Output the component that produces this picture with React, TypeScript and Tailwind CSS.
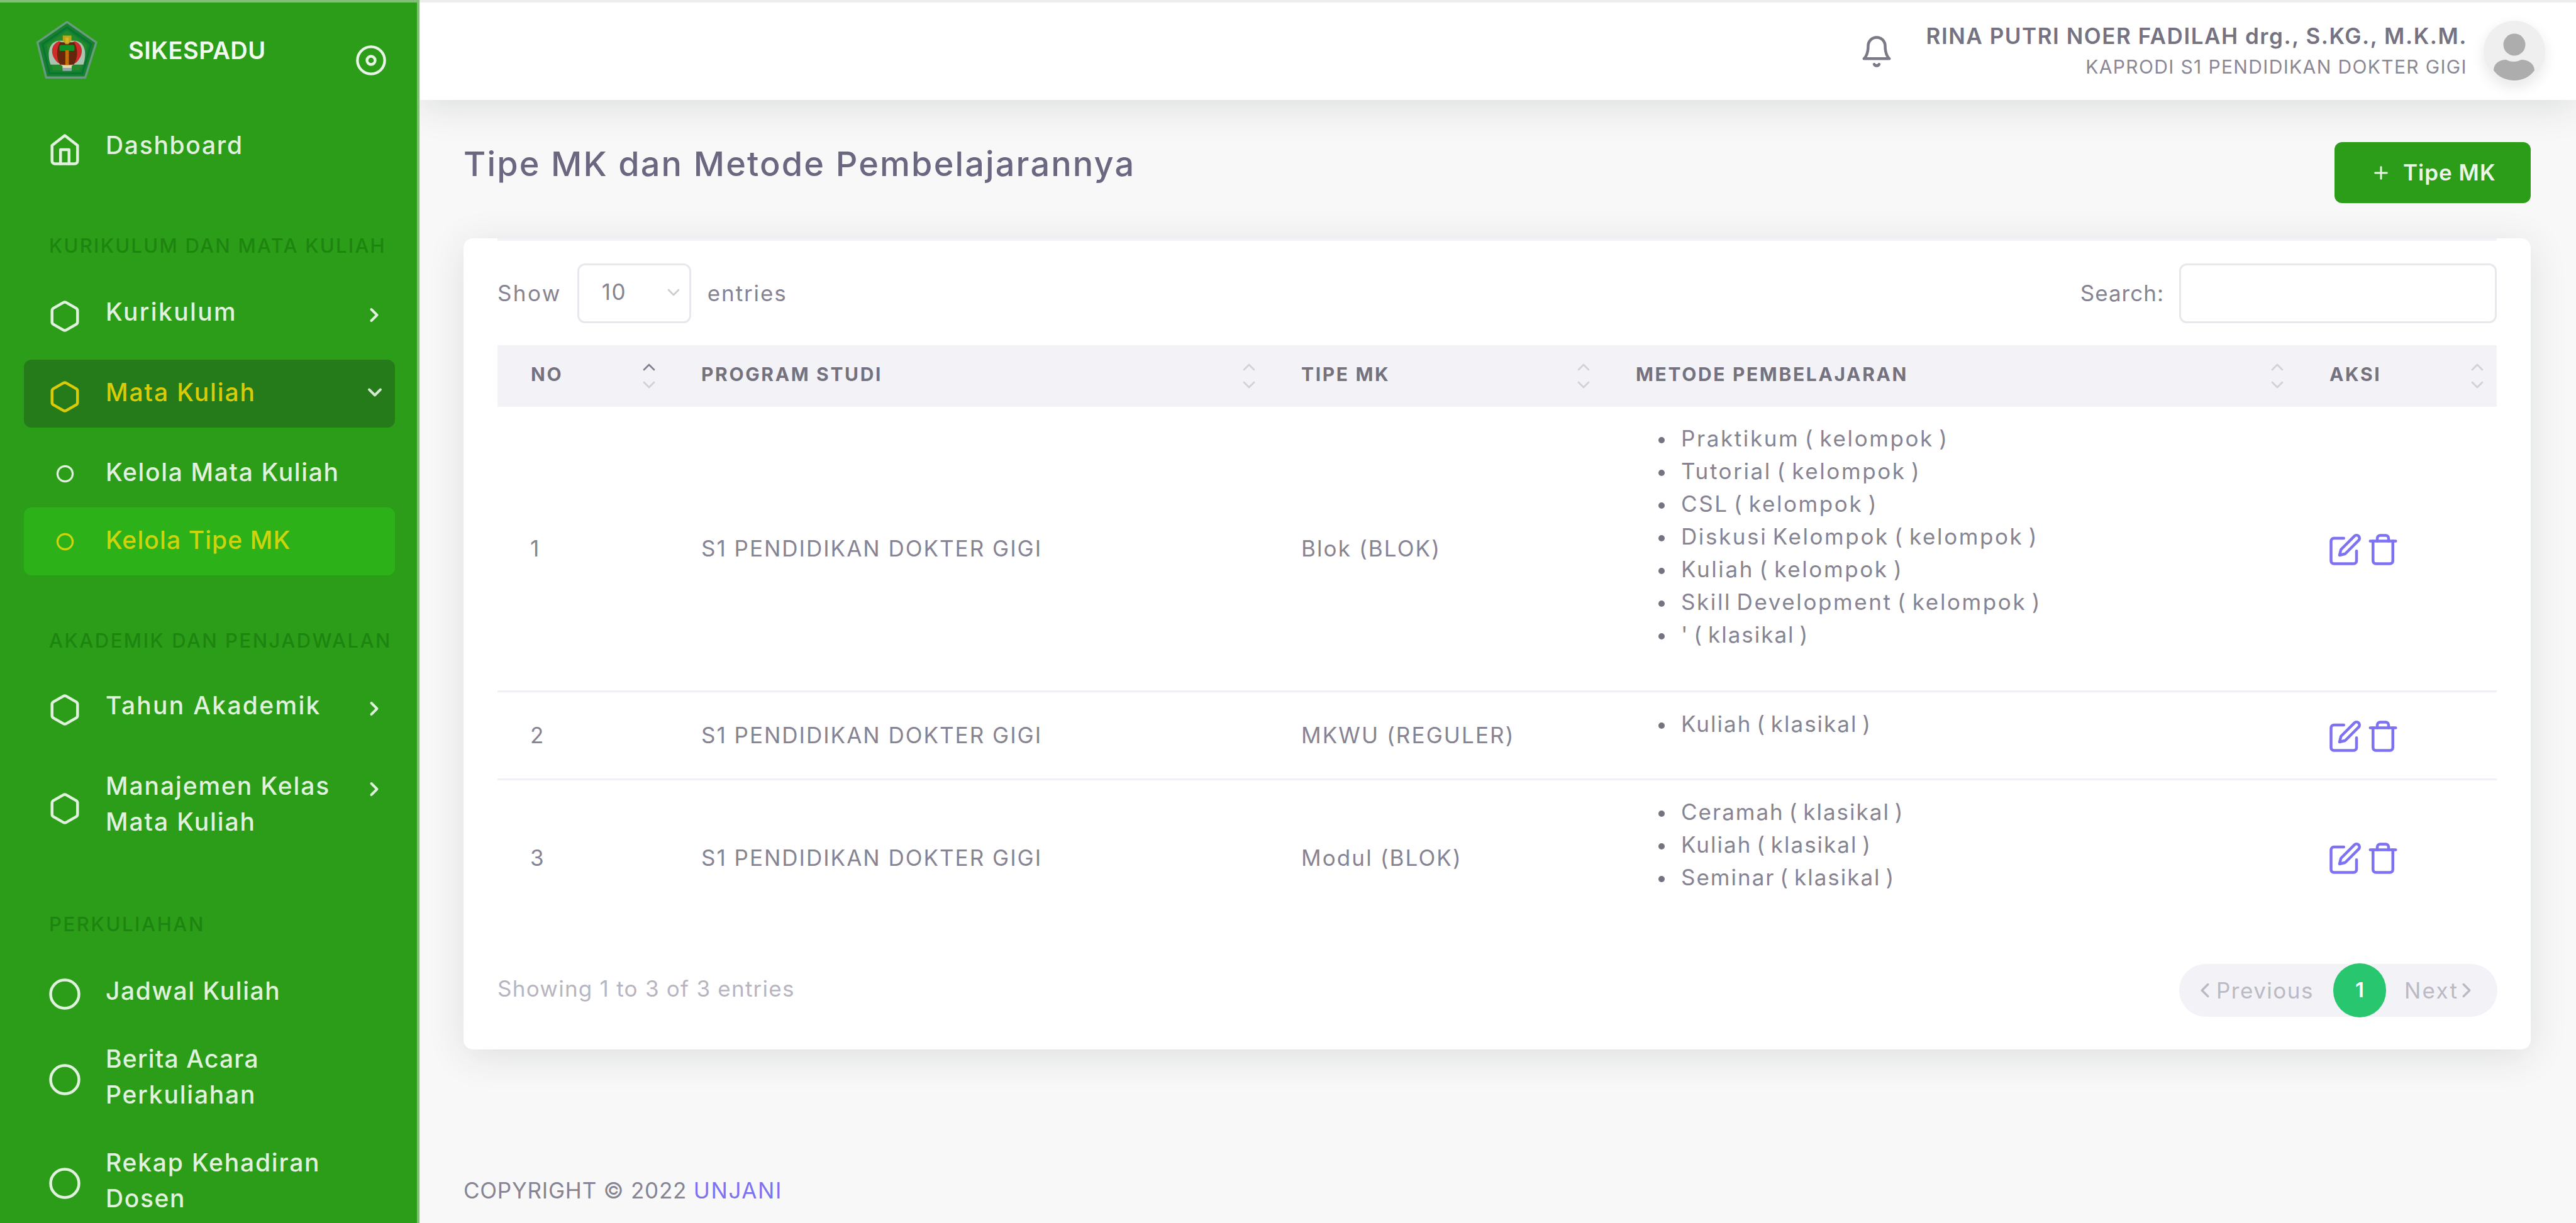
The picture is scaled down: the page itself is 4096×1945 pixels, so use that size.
import React from "react";
import {
  FiBell,
  FiChevronDown,
  FiChevronLeft,
  FiChevronRight,
  FiChevronUp,
  FiCircle,
  FiDisc,
  FiEdit,
  FiHexagon,
  FiHome,
  FiPlus,
  FiTrash,
} from "react-icons/fi";

type IconType = React.ComponentType<{ className?: string; strokeWidth?: number }>;

function Logo() {
  return (
    <svg viewBox="60 45 540 510" className="h-[95px] w-[101px]">
      <polygon points="330,66 580,240 486,540 152,540 78,240" fill="#16812f" stroke="#6a9b80" strokeWidth="18" strokeLinejoin="round" />
      <polygon points="330,112 536,255 460,505 180,505 122,255" fill="none" stroke="#0a7432" strokeWidth="16" />
      <polygon points="330,140 505,262 440,480 210,480 155,262" fill="#238b2c" />
      <path d="M262 226C170 236 160 340 190 430h84l44 34h24l44-34h84c30-90 20-194-72-204z" fill="#a9c4b0" />
      <path d="M262 230c-76 30-78 120-10 184l78 36 78-36c68-64 66-154-10-184l-68 30z" fill="#cf2b2b" />
      <path d="M272 240c-40 60-30 150 0 190h116c34-50 40-130 4-190z" fill="#66260d" />
      <rect x="266" y="262" width="128" height="52" rx="14" fill="#0d9226" />
      <rect x="316" y="308" width="30" height="124" fill="#c2700c" />
      <path d="M294 182h74v40l-26 34h-24l-24-34z" fill="#b9a91a" />
      <rect x="318" y="200" width="26" height="42" fill="#e2b32a" />
      <rect x="292" y="434" width="78" height="26" fill="#e0dba8" />
      <rect x="292" y="458" width="78" height="26" fill="#97a5ab" />
    </svg>
  );
}

function SectionLabel({ children, className }: { children: string; className: string }) {
  return (
    <div className={`flex shrink-0 items-center pl-[78px] text-[31px] leading-none font-medium whitespace-nowrap text-[#1e8410] ${className}`}>
      {children}
    </div>
  );
}

function MenuItem({
  icon: Icon,
  lines,
  chevron,
  className = "",
  color = "text-[#e0f1dd]",
  iconClass = "mt-[10px] size-[54px]",
  stroke = 2,
}: {
  icon: IconType;
  lines: { text: string; tracking: string }[];
  chevron?: "right" | "down";
  className?: string;
  color?: string;
  iconClass?: string;
  stroke?: number;
}) {
  return (
    <div className={`ml-[38px] flex w-[590px] shrink-0 rounded-xl ${color} ${lines.length > 1 ? "h-[165px]" : "h-[108px]"} ${className}`}>
      <div className="ml-[38px] flex w-[54px] items-center justify-center">
        <Icon className={iconClass} strokeWidth={stroke} />
      </div>
      <div className="ml-[38px] flex-1 pt-[23px] text-[39px] leading-[57px] font-medium whitespace-nowrap">
        {lines.map((l) => (
          <div key={l.text} className={l.tracking}>
            {l.text}
          </div>
        ))}
      </div>
      {chevron === "right" && <FiChevronRight className="mt-[39px] mr-[15px] size-[36px] text-[#e0f1dd]" strokeWidth={2.6} />}
      {chevron === "down" && <FiChevronDown className="mt-[34px] mr-[14px] size-[36px] text-[#d5e6d2]" strokeWidth={2.6} />}
    </div>
  );
}

function Sidebar() {
  return (
    <aside className="relative z-20 flex h-full w-[667px] shrink-0 flex-col overflow-hidden border-t-4 border-r-4 border-[#83be79] bg-[#2c9d19]">
      <div className="flex h-[175px] shrink-0">
        <div className="mt-[27px] ml-[56px]">
          <Logo />
        </div>
        <div className="mt-[56px] ml-[47px] flex-1 text-[38px] leading-[40px] font-semibold tracking-[0.5px] text-[#f2faf0]">SIKESPADU</div>
        <FiDisc className="mt-[66px] mr-[47px] size-[52px] text-[#e9f5e7]" />
      </div>
      <MenuItem icon={FiHome} lines={[{ text: "Dashboard", tracking: "tracking-[1.7px]" }]} />
      <SectionLabel className="h-[157px] pt-[50px] tracking-[2.25px]">KURIKULUM DAN MATA KULIAH</SectionLabel>
      <MenuItem icon={FiHexagon} chevron="right" lines={[{ text: "Kurikulum", tracking: "tracking-[2.4px]" }]} />
      <MenuItem
        icon={FiHexagon}
        chevron="down"
        color="text-[#d9cb08]"
        className="mt-5 bg-[#257b19]"
        lines={[{ text: "Mata Kuliah", tracking: "tracking-[1.9px]" }]}
      />
      <MenuItem
        icon={FiCircle}
        iconClass="size-[29px]"
        stroke={2.6}
        className="mt-[19px]"
        lines={[{ text: "Kelola Mata Kuliah", tracking: "tracking-[1.65px]" }]}
      />
      <MenuItem
        icon={FiCircle}
        iconClass="size-[29px]"
        stroke={2.6}
        color="text-[#cdd40c]"
        className="bg-[#2cb118]"
        lines={[{ text: "Kelola Tipe MK", tracking: "tracking-[1.1px]" }]}
      />
      <SectionLabel className="h-[155px] pt-[52px] tracking-[2.5px]">AKADEMIK DAN PENJADWALAN</SectionLabel>
      <MenuItem icon={FiHexagon} chevron="right" lines={[{ text: "Tahun Akademik", tracking: "tracking-[2.3px]" }]} />
      <MenuItem
        icon={FiHexagon}
        chevron="right"
        className="mt-5"
        lines={[
          { text: "Manajemen Kelas", tracking: "tracking-[1.9px]" },
          { text: "Mata Kuliah", tracking: "tracking-[1.9px]" },
        ]}
      />
      <SectionLabel className="h-[161px] pt-[51px] tracking-[2.6px]">PERKULIAHAN</SectionLabel>
      <MenuItem icon={FiCircle} iconClass="mt-[5px] size-[54px]" lines={[{ text: "Jadwal Kuliah", tracking: "tracking-[1.6px]" }]} />
      <MenuItem
        icon={FiCircle}
        iconClass="mt-[4px] size-[54px]"
        lines={[
          { text: "Berita Acara", tracking: "tracking-[1.2px]" },
          { text: "Perkuliahan", tracking: "tracking-[1.8px]" },
        ]}
      />
      <MenuItem
        icon={FiCircle}
        iconClass="mt-[4px] size-[54px]"
        lines={[
          { text: "Rekap Kehadiran", tracking: "tracking-[1.8px]" },
          { text: "Dosen", tracking: "tracking-[1.6px]" },
        ]}
      />
    </aside>
  );
}

function Avatar() {
  return (
    <div className="size-[98px] overflow-hidden rounded-full bg-[#efefef] shadow-[0_8px_20px_rgba(34,41,47,0.10)]">
      <svg viewBox="0 0 98 98" className="size-full">
        <circle cx="49" cy="38" r="17.5" fill="#adadad" />
        <path d="M16 79c0-10 8-17 20-17 4 2 7 3 12 3s8-1 12-3c12 0 21 7 21 17-8 11-20 16-32 16S24 90 16 79z" fill="#adadad" />
      </svg>
    </div>
  );
}

function Header() {
  return (
    <header className="relative z-10 flex h-[159px] shrink-0 border-t-4 border-[#ededed] bg-white pr-[49px] shadow-[0_10px_60px_rgba(34,41,47,0.13)]">
      <FiBell className="mt-[51px] ml-auto size-[54px] text-[#7b7887]" />
      <div className="mt-[29px] ml-[52px] text-right whitespace-nowrap">
        <div className="text-[35px] leading-[49px] font-semibold tracking-[1.54px] text-[#757281]">
          RINA PUTRI NOER FADILAH drg., S.KG., M.K.M.
        </div>
        <div className="text-[30px] leading-[49px] tracking-[1.35px] text-[#8b8896]">KAPRODI S1 PENDIDIKAN DOKTER GIGI</div>
      </div>
      <div className="mt-[29px] ml-[26px]">
        <Avatar />
      </div>
    </header>
  );
}

const columns = [
  { label: "NO", width: "w-[271px]", sorted: true },
  { label: "PROGRAM STUDI", width: "w-[954px]" },
  { label: "TIPE MK", width: "w-[532px]" },
  { label: "METODE PEMBELAJARAN", width: "w-[1103px]" },
  { label: "AKSI", width: "w-[318px]" },
];

const rows = [
  {
    no: "1",
    tipe: "Blok (BLOK)",
    height: "h-[454px]",
    border: true,
    metode: [
      "Praktikum ( kelompok )",
      "Tutorial ( kelompok )",
      "CSL ( kelompok )",
      "Diskusi Kelompok ( kelompok )",
      "Kuliah ( kelompok )",
      "Skill Development ( kelompok )",
      "' ( klasikal )",
    ],
  },
  { no: "2", tipe: "MKWU (REGULER)", height: "h-[140px]", border: true, metode: ["Kuliah ( klasikal )"] },
  {
    no: "3",
    tipe: "Modul (BLOK)",
    height: "h-[246px]",
    border: false,
    metode: ["Ceramah ( klasikal )", "Kuliah ( klasikal )", "Seminar ( klasikal )"],
  },
];

function Table() {
  return (
    <div className="mt-[35px] whitespace-nowrap">
      <div className="flex h-[98px] bg-[#f3f2f7]">
        {columns.map((c) => (
          <div key={c.label} className={`flex items-center justify-between pr-[14px] pl-[53px] ${c.width}`}>
            <span className="pb-[6px] text-[30px] leading-none font-bold tracking-[2.65px] text-[#75727f]">{c.label}</span>
            <span className="flex flex-col text-[#d2d0d9]">
              <FiChevronUp className={`size-[32px] ${c.sorted ? "text-[#827f8d]" : ""}`} />
              <FiChevronDown className="-mt-1 size-[32px]" />
            </span>
          </div>
        ))}
      </div>
      {rows.map((r) => (
        <div key={r.no} className={`flex text-[35px] text-[#868492] ${r.height} ${r.border ? "border-b-3 border-[#f0eff5]" : ""}`}>
          <div className="flex w-[271px] items-center pl-[52px]">{r.no}</div>
          <div className="flex w-[954px] items-center pl-[53px] tracking-[2px]">S1 PENDIDIKAN DOKTER GIGI</div>
          <div className="flex w-[532px] items-center pl-[53px] tracking-[2.1px]">{r.tipe}</div>
          <ul className="w-[1103px] pt-[24px] pl-[89px]">
            {r.metode.map((m) => (
              <li key={m} className="flex h-[52px] items-center [word-spacing:-4px]">
                <span className="mt-[5px] mr-[26px] size-[10px] rounded-full bg-[#757281]" />
                <span className={m.includes("klasikal") ? "tracking-[2px]" : "tracking-[2.6px]"}>{m}</span>
              </li>
            ))}
          </ul>
          <div className="flex w-[318px] items-center gap-[6px] pt-[2px] pl-[51px] text-[#7d72f1]">
            <FiEdit className="size-[54px]" />
            <FiTrash className="size-[54px]" />
          </div>
        </div>
      ))}
    </div>
  );
}

function Card() {
  return (
    <section className="mt-[55px] h-[1290px] rounded-[15px] bg-white px-[54px] shadow-[0_10px_60px_rgba(34,41,47,0.12)]">
      <div className="h-[40px] border-t-4 border-[#f3f2f7]" />
      <div className="flex h-[95px] items-center text-[35px] text-[#868492]">
        <span className="tracking-[2.4px]">Show</span>
        <div className="ml-[25px] flex h-full w-[181px] items-center justify-between rounded-xl border-3 border-[#e8e7ed] pr-[9px] pb-[4px] pl-[36px]">
          <span className="tracking-[1.4px]">10</span>
          <FiChevronDown className="size-[32px] text-[#cdcbd4]" />
        </div>
        <span className="ml-[26px] tracking-[1.9px]">entries</span>
        <span className="ml-auto tracking-[1px]">Search:</span>
        <div className="ml-[24px] h-full w-[505px] rounded-xl border-3 border-[#e8e7ed]" />
      </div>
      <Table />
      <div className="mt-[46px] flex items-center justify-between text-[35px]">
        <span className="pb-[6px] tracking-[1.25px] text-[#b7b5c0]">Showing 1 to 3 of 3 entries</span>
        <div className="-mr-[1px] flex h-[84px] w-[506px] items-center rounded-full bg-[#f3f2f7] text-[#bbb9c4]">
          <FiChevronLeft className="ml-[22px] size-[38px]" strokeWidth={2.2} />
          <span className="-ml-[1px] w-[160px] tracking-[1.5px]">Previous</span>
          <span className="ml-[26px] flex h-[86px] w-[84px] shrink-0 items-center justify-center rounded-full bg-[#28c76f] text-[33px] font-semibold text-white">
            1
          </span>
          <span className="ml-[29px] tracking-[2.2px]">Next</span>
          <FiChevronRight className="-ml-[6px] size-[38px]" strokeWidth={2.2} />
        </div>
      </div>
    </section>
  );
}

export default function App() {
  return (
    <div className="flex h-[1945px] w-[4096px] overflow-hidden bg-[#f8f8f8] font-['Inter',sans-serif]">
      <Sidebar />
      <div className="flex flex-1 flex-col">
        <Header />
        <main className="flex-1 pr-[72px] pl-[70px]">
          <div className="mt-[67px] flex h-[98px] justify-between">
            <h1 className="mt-[3px] text-[54px] leading-[64px] font-medium tracking-[2.14px] text-[#6c6781]">
              Tipe MK dan Metode Pembelajarannya
            </h1>
            <button className="flex h-[97px] w-[312px] items-center rounded-xl bg-[#2c9d19] pl-[58px] text-[35px] font-semibold tracking-[1px] text-[#eaf5e8]">
              <FiPlus className="size-[32px]" strokeWidth={2.2} />
              <span className="ml-[19px]">Tipe MK</span>
            </button>
          </div>
          <Card />
          <footer className="mt-[198px] text-[35px] leading-[52px] text-[#868492]">
            <span className="tracking-[0.77px]">COPYRIGHT © 2022 </span>
            <span className="tracking-[1.6px] text-[#7d72f1]">UNJANI</span>
          </footer>
        </main>
      </div>
    </div>
  );
}
